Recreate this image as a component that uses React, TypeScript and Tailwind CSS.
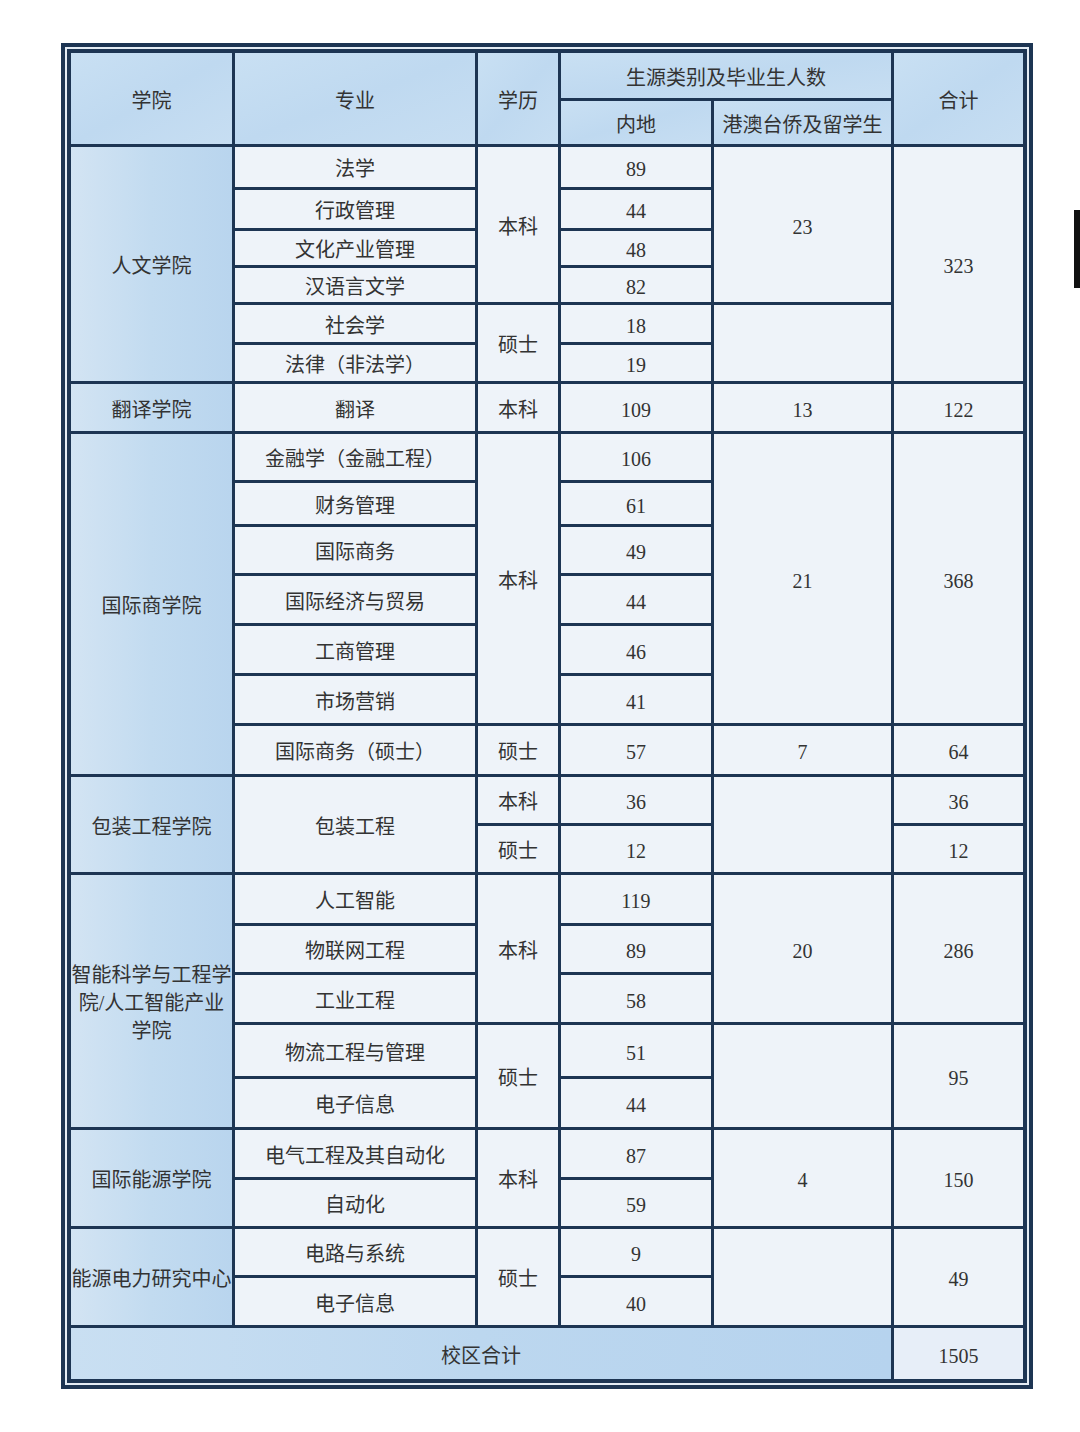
import React from "react";

type Tone = "h" | "c1" | "b" | "t" | "tv";

const toneCls: Record<Tone, string> = {
  h: "bg-gradient-to-br from-[#c9e0f3] via-[#bfd9f0] to-[#c7def2]",
  c1: "bg-gradient-to-r from-[#d3e4f3] via-[#c2dbf0] to-[#b9d5ee]",
  b: "bg-[#eef3f9]",
  t: "bg-gradient-to-r from-[#c9dff2] via-[#bcd7ef] to-[#b6d3ee]",
  tv: "bg-[#e7eef8]",
};

function Cell({ pos, tone = "b", children }: { pos: string; tone?: Tone; children?: React.ReactNode }) {
  return (
    <div className={`${pos} ${toneCls[tone]} flex items-center justify-center pt-[4px] text-center text-[20px] leading-[28px] text-[#333333]`}>
      {children}
    </div>
  );
}

export default function App() {
  return (
    <div
      className="relative w-[1080px] h-[1432px] bg-white pt-[43px] pl-[61px]"
      style={{ fontFamily: '"Liberation Serif", "Noto Sans CJK SC", serif' }}
    >
      <div className="w-[972px] border-4 border-[#1d3553] bg-[#e4ecf4] p-[2px]">
        <div className="grid border-4 border-[#1d3553] bg-[#1d3553] gap-[3px] grid-cols-[161px_240px_80px_150px_177px_129px] grid-rows-[45px_43px_40px_38px_34px_34px_37px_36px_47px_46px_41px_46px_47px_47px_47px_48px_46px_46px_48px_46px_47px_51px_48px_47px_46px_46px_47px_51px]">
          {/* header */}
          <Cell pos="col-[1] row-[1/span_2]" tone="h">学院</Cell>
          <Cell pos="col-[2] row-[1/span_2]" tone="h">专业</Cell>
          <Cell pos="col-[3] row-[1/span_2]" tone="h">学历</Cell>
          <Cell pos="col-[4/span_2] row-[1]" tone="h">生源类别及毕业生人数</Cell>
          <Cell pos="col-[6] row-[1/span_2]" tone="h">合计</Cell>
          <Cell pos="col-[4] row-[2]" tone="h">内地</Cell>
          <Cell pos="col-[5] row-[2]" tone="h">港澳台侨及留学生</Cell>

          {/* 人文学院 */}
          <Cell pos="col-[1] row-[3/span_6]" tone="c1">人文学院</Cell>
          <Cell pos="col-[2] row-[3]">法学</Cell>
          <Cell pos="col-[2] row-[4]">行政管理</Cell>
          <Cell pos="col-[2] row-[5]">文化产业管理</Cell>
          <Cell pos="col-[2] row-[6]">汉语言文学</Cell>
          <Cell pos="col-[2] row-[7]">社会学</Cell>
          <Cell pos="col-[2] row-[8]">法律（非法学）</Cell>
          <Cell pos="col-[3] row-[3/span_4]">本科</Cell>
          <Cell pos="col-[3] row-[7/span_2]">硕士</Cell>
          <Cell pos="col-[4] row-[3]">89</Cell>
          <Cell pos="col-[4] row-[4]">44</Cell>
          <Cell pos="col-[4] row-[5]">48</Cell>
          <Cell pos="col-[4] row-[6]">82</Cell>
          <Cell pos="col-[4] row-[7]">18</Cell>
          <Cell pos="col-[4] row-[8]">19</Cell>
          <Cell pos="col-[5] row-[3/span_4]">23</Cell>
          <Cell pos="col-[5] row-[7/span_2]"></Cell>
          <Cell pos="col-[6] row-[3/span_6]">323</Cell>

          {/* 翻译学院 */}
          <Cell pos="col-[1] row-[9]" tone="c1">翻译学院</Cell>
          <Cell pos="col-[2] row-[9]">翻译</Cell>
          <Cell pos="col-[3] row-[9]">本科</Cell>
          <Cell pos="col-[4] row-[9]">109</Cell>
          <Cell pos="col-[5] row-[9]">13</Cell>
          <Cell pos="col-[6] row-[9]">122</Cell>

          {/* 国际商学院 */}
          <Cell pos="col-[1] row-[10/span_7]" tone="c1">国际商学院</Cell>
          <Cell pos="col-[2] row-[10]">金融学（金融工程）</Cell>
          <Cell pos="col-[2] row-[11]">财务管理</Cell>
          <Cell pos="col-[2] row-[12]">国际商务</Cell>
          <Cell pos="col-[2] row-[13]">国际经济与贸易</Cell>
          <Cell pos="col-[2] row-[14]">工商管理</Cell>
          <Cell pos="col-[2] row-[15]">市场营销</Cell>
          <Cell pos="col-[2] row-[16]">国际商务（硕士）</Cell>
          <Cell pos="col-[3] row-[10/span_6]">本科</Cell>
          <Cell pos="col-[3] row-[16]">硕士</Cell>
          <Cell pos="col-[4] row-[10]">106</Cell>
          <Cell pos="col-[4] row-[11]">61</Cell>
          <Cell pos="col-[4] row-[12]">49</Cell>
          <Cell pos="col-[4] row-[13]">44</Cell>
          <Cell pos="col-[4] row-[14]">46</Cell>
          <Cell pos="col-[4] row-[15]">41</Cell>
          <Cell pos="col-[4] row-[16]">57</Cell>
          <Cell pos="col-[5] row-[10/span_6]">21</Cell>
          <Cell pos="col-[5] row-[16]">7</Cell>
          <Cell pos="col-[6] row-[10/span_6]">368</Cell>
          <Cell pos="col-[6] row-[16]">64</Cell>

          {/* 包装工程学院 */}
          <Cell pos="col-[1] row-[17/span_2]" tone="c1">包装工程学院</Cell>
          <Cell pos="col-[2] row-[17/span_2]">包装工程</Cell>
          <Cell pos="col-[3] row-[17]">本科</Cell>
          <Cell pos="col-[3] row-[18]">硕士</Cell>
          <Cell pos="col-[4] row-[17]">36</Cell>
          <Cell pos="col-[4] row-[18]">12</Cell>
          <Cell pos="col-[5] row-[17/span_2]"></Cell>
          <Cell pos="col-[6] row-[17]">36</Cell>
          <Cell pos="col-[6] row-[18]">12</Cell>

          {/* 智能科学与工程学院 */}
          <Cell pos="col-[1] row-[19/span_5]" tone="c1">智能科学与工程学院/人工智能产业学院</Cell>
          <Cell pos="col-[2] row-[19]">人工智能</Cell>
          <Cell pos="col-[2] row-[20]">物联网工程</Cell>
          <Cell pos="col-[2] row-[21]">工业工程</Cell>
          <Cell pos="col-[2] row-[22]">物流工程与管理</Cell>
          <Cell pos="col-[2] row-[23]">电子信息</Cell>
          <Cell pos="col-[3] row-[19/span_3]">本科</Cell>
          <Cell pos="col-[3] row-[22/span_2]">硕士</Cell>
          <Cell pos="col-[4] row-[19]">119</Cell>
          <Cell pos="col-[4] row-[20]">89</Cell>
          <Cell pos="col-[4] row-[21]">58</Cell>
          <Cell pos="col-[4] row-[22]">51</Cell>
          <Cell pos="col-[4] row-[23]">44</Cell>
          <Cell pos="col-[5] row-[19/span_3]">20</Cell>
          <Cell pos="col-[5] row-[22/span_2]"></Cell>
          <Cell pos="col-[6] row-[19/span_3]">286</Cell>
          <Cell pos="col-[6] row-[22/span_2]">95</Cell>

          {/* 国际能源学院 */}
          <Cell pos="col-[1] row-[24/span_2]" tone="c1">国际能源学院</Cell>
          <Cell pos="col-[2] row-[24]">电气工程及其自动化</Cell>
          <Cell pos="col-[2] row-[25]">自动化</Cell>
          <Cell pos="col-[3] row-[24/span_2]">本科</Cell>
          <Cell pos="col-[4] row-[24]">87</Cell>
          <Cell pos="col-[4] row-[25]">59</Cell>
          <Cell pos="col-[5] row-[24/span_2]">4</Cell>
          <Cell pos="col-[6] row-[24/span_2]">150</Cell>

          {/* 能源电力研究中心 */}
          <Cell pos="col-[1] row-[26/span_2]" tone="c1">能源电力研究中心</Cell>
          <Cell pos="col-[2] row-[26]">电路与系统</Cell>
          <Cell pos="col-[2] row-[27]">电子信息</Cell>
          <Cell pos="col-[3] row-[26/span_2]">硕士</Cell>
          <Cell pos="col-[4] row-[26]">9</Cell>
          <Cell pos="col-[4] row-[27]">40</Cell>
          <Cell pos="col-[5] row-[26/span_2]"></Cell>
          <Cell pos="col-[6] row-[26/span_2]">49</Cell>

          {/* total */}
          <Cell pos="col-[1/span_5] row-[28]" tone="t">校区合计</Cell>
          <Cell pos="col-[6] row-[28]" tone="tv">1505</Cell>
        </div>
      </div>
      <div className="absolute left-[1074px] top-[210px] w-[6px] h-[78px] bg-[#111111]" />
    </div>
  );
}
